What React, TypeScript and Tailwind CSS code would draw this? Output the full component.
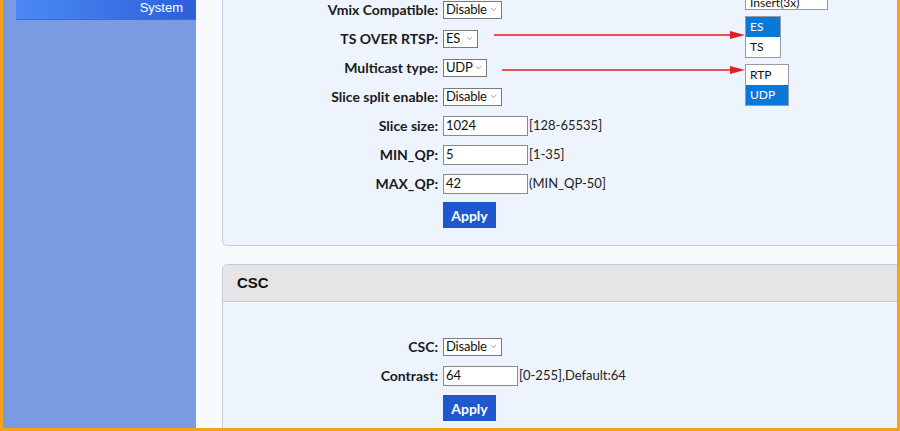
import { ChevronDown } from "lucide-react";

const BASE_FONT = { fontFamily: 'Lato, "Noto Sans", sans-serif' };

const Select = ({ value, width }: { value: string; width: string }) => (
  <div
    className={`${width} h-[18px] flex items-center justify-between border border-[#7a7a7a] bg-white pl-[2px] pr-[3px] text-[13px] tracking-[-0.2px] leading-none text-[#111]`}
  >
    <span>{value}</span>
    <ChevronDown size={9} strokeWidth={1.5} className="text-[#555] shrink-0" />
  </div>
);

const Input = ({ value, width }: { value: string; width: string }) => (
  <div
    className={`${width} h-[20px] flex items-center border border-[#8a8a8a] bg-white pl-[2px] text-[13px] leading-none text-[#111]`}
  >
    {value}
  </div>
);

const Row = ({ label, children }: { label: string; children: React.ReactNode }) => (
  <div className="h-[29px] flex items-center">
    <div className="w-[215px] shrink-0 text-right font-bold text-[14px] text-[#1a1a1a]">{label}</div>
    <div className="ml-[5px] flex items-center gap-[1px] text-[13px] text-[#222]">{children}</div>
  </div>
);

const ApplyButton = () => (
  <div className="ml-[220px] w-[53px] h-[26px] flex items-center justify-center bg-[#1f58cc] text-white font-bold text-[14px]">
    Apply
  </div>
);

export default function App() {
  return (
    <div
      className="relative w-[900px] h-[431px] overflow-hidden flex border-l-[3px] border-r-[3px] border-b-[3px] border-[#f7a01c]"
      style={BASE_FONT}
    >
      {/* left menu */}
      <aside className="w-[193px] shrink-0 bg-[#7a9be2]">
        <div
          className="ml-[13px] h-[20px] border-b border-[#3b6bd4] bg-gradient-to-r from-[#4c89f5] to-[#2c60d8] pr-[13px] text-right text-white text-[13px] leading-[16px]"
          style={{ fontFamily: '"Liberation Sans", Arial, sans-serif' }}
        >
          System
        </div>
      </aside>

      {/* content */}
      <main className="flex-1 bg-[#f8fbfe] pl-[26px] overflow-hidden">
        <section className="-mt-[5px] w-[700px] border border-t-0 border-[#c3cde0] rounded-b-[5px] bg-[#eef4fd] pb-[17px]">
          <Row label="Vmix Compatible:">
            <Select value="Disable" width="w-[59px]" />
          </Row>
          <Row label="TS OVER RTSP:">
            <Select value="ES" width="w-[35px]" />
          </Row>
          <Row label="Multicast type:">
            <Select value="UDP" width="w-[44px]" />
          </Row>
          <Row label="Slice split enable:">
            <Select value="Disable" width="w-[59px]" />
          </Row>
          <Row label="Slice size:">
            <Input value="1024" width="w-[85px]" />
            <span>[128-65535]</span>
          </Row>
          <Row label="MIN_QP:">
            <Input value="5" width="w-[85px]" />
            <span>[1-35]</span>
          </Row>
          <Row label="MAX_QP:">
            <Input value="42" width="w-[85px]" />
            <span>(MIN_QP-50]</span>
          </Row>
          <div className="mt-[4px]">
            <ApplyButton />
          </div>
        </section>

        <section className="mt-[18px] w-[700px] border border-[#c3cde0] rounded-t-[5px] bg-[#eef4fd] h-[200px]">
          <div
            className="h-[37px] border-b border-[#c3cde0] bg-[#e5e5e5] rounded-t-[5px] pl-[14px] flex items-center font-bold text-[15px] text-[#111]"
            style={{ fontFamily: '"Liberation Sans", Arial, sans-serif' }}
          >
            CSC
          </div>
          <div className="pt-[30px]">
            <Row label="CSC:">
              <Select value="Disable" width="w-[59px]" />
            </Row>
            <Row label="Contrast:">
              <Input value="64" width="w-[75px]" />
              <span>[0-255],Default:64</span>
            </Row>
            <div className="mt-[5px]">
              <ApplyButton />
            </div>
          </div>
        </section>
      </main>

      {/* opened dropdown lists shown as callouts */}
      <div className="absolute left-[742px] top-[-9px] w-[83px] h-[19px] border border-[#9a9a9a] bg-white pl-[4px] text-[12px] leading-[22px] text-[#111]">
        Insert(3x)
      </div>
      <div className="absolute left-[742px] top-[16px] w-[36px] border border-[#9a9a9a] bg-white text-[12px] text-[#111]">
        <div className="h-[20px] pl-[4px] flex items-center bg-[#0a78d7] text-white">ES</div>
        <div className="h-[20px] pl-[4px] flex items-center">TS</div>
      </div>
      <div className="absolute left-[742px] top-[64px] w-[44px] border border-[#9a9a9a] bg-white text-[12px] text-[#111]">
        <div className="h-[20px] pl-[4px] flex items-center">RTP</div>
        <div className="h-[20px] pl-[4px] flex items-center bg-[#0a78d7] text-white">UDP</div>
      </div>

      <svg className="absolute left-[-3px] top-0 pointer-events-none" width="900" height="431">
        <line x1="494" y1="35" x2="734" y2="35" stroke="#e21f26" strokeWidth="1.6" />
        <polygon points="730,31 745,35 730,39" fill="#e21f26" />
        <line x1="502" y1="70" x2="734" y2="70" stroke="#e21f26" strokeWidth="1.6" />
        <polygon points="730,66 745,70 730,74" fill="#e21f26" />
      </svg>
    </div>
  );
}
